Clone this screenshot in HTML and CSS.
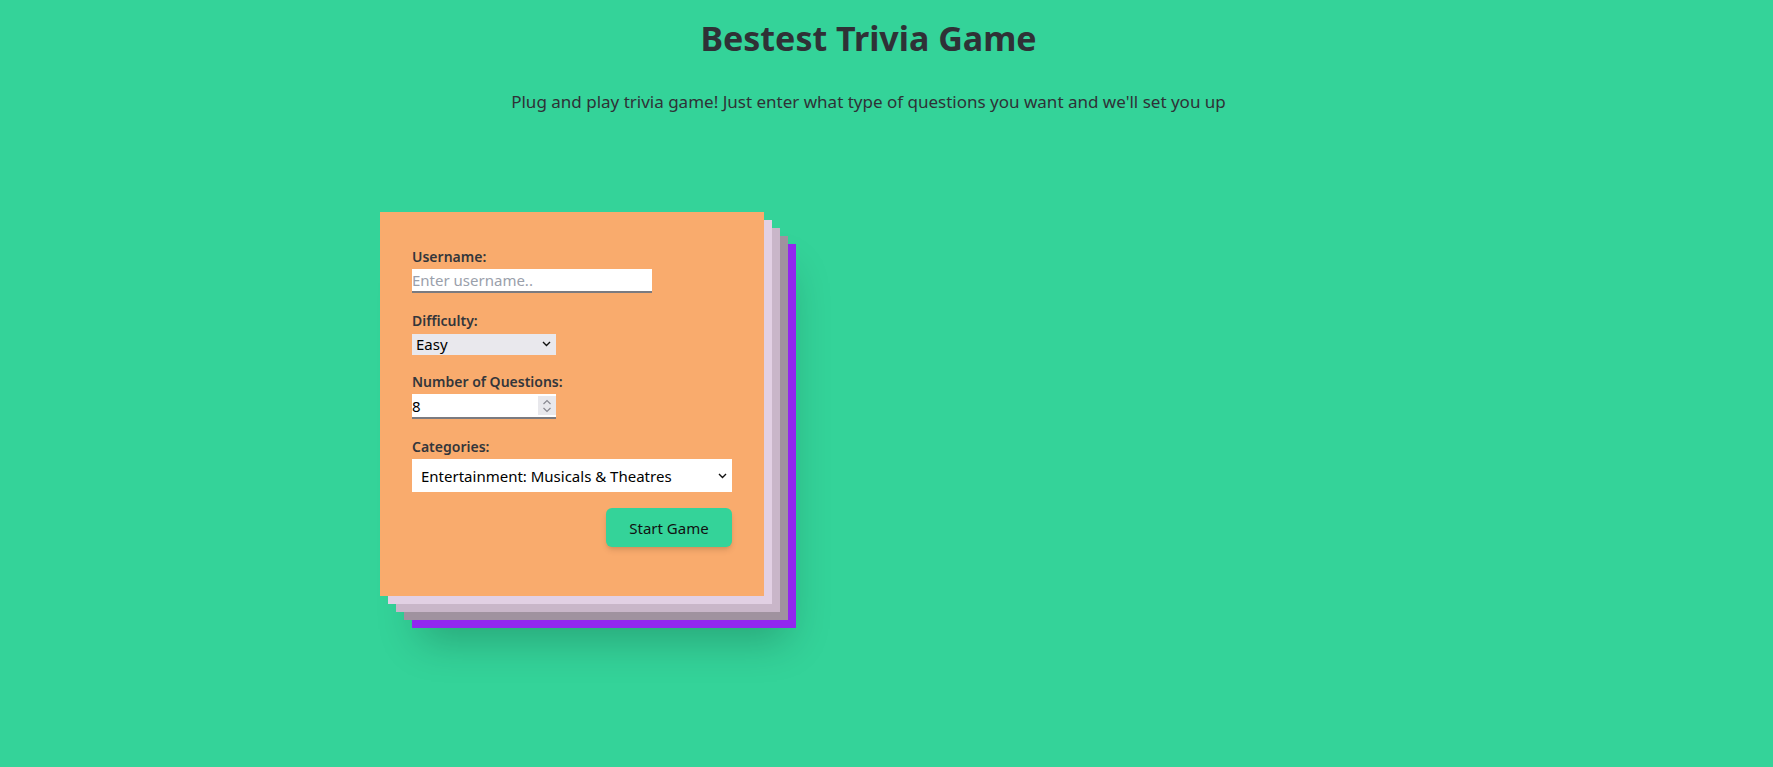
FILE: index.html
```html
<!DOCTYPE html>
<html lang="en">
<head>
<meta charset="utf-8">
<title>Bestest Trivia Game</title>
<link rel="stylesheet" href="styles.css">
</head>
<body>
<header class="header">
  <h1 class="title">Bestest Trivia Game</h1>
  <p class="subtitle">Plug and play trivia game! Just enter what type of questions you want and we'll set you up</p>
</header>
<main class="main">
  <form class="card">
    <div class="field">
      <label class="label" for="username">Username:</label>
      <input class="text-input" id="username" type="text" placeholder="Enter username..">
    </div>
    <div class="field">
      <label class="label" for="difficulty">Difficulty:</label>
      <div class="select-wrap small">
        <select class="select diff" id="difficulty">
          <option>Easy</option>
          <option>Medium</option>
          <option>Hard</option>
        </select>
        <svg class="chev" width="9" height="6" viewBox="0 0 9 6"><path d="M1 1 L4.5 4.5 L8 1" fill="none" stroke="#111" stroke-width="1.4"/></svg>
      </div>
    </div>
    <div class="field">
      <label class="label" for="count">Number of Questions:</label>
      <div class="num-wrap">
        <input class="num-input" id="count" type="number" value="8">
        <span class="spin"><svg width="10" height="14" viewBox="0 0 10 14"><path d="M1.5 5 L5 1.5 L8.5 5" fill="none" stroke="#8a8a92" stroke-width="1.2"/><path d="M1.5 9 L5 12.5 L8.5 9" fill="none" stroke="#8a8a92" stroke-width="1.2"/></svg></span>
      </div>
    </div>
    <div class="field">
      <label class="label" for="category">Categories:</label>
      <div class="select-wrap wide">
        <select class="select cat" id="category">
          <option>Entertainment: Musicals &amp; Theatres</option>
        </select>
        <svg class="chev" width="9" height="6" viewBox="0 0 9 6"><path d="M1 1 L4.5 4.5 L8 1" fill="none" stroke="#111" stroke-width="1.4"/></svg>
      </div>
    </div>
    <div class="actions">
      <button class="btn" type="button">Start Game</button>
    </div>
  </form>
</main>
</body>
</html>
```
FILE: styles.css
```css
* { box-sizing: border-box; }
html, body { margin: 0; padding: 0; }
body {
  background: #34d399;
  min-height: 100vh;
  font-family: "Noto Sans", "Open Sans", sans-serif;
  color: #2f3136;
}
.header {
  text-align: center;
  padding-top: 16px;
  padding-right: 36px;
}
.title {
  margin: 0;
  font-size: 34px;
  line-height: 44px;
  font-weight: 700;
  color: #2f3136;
}
.subtitle {
  margin: 30px 0 0;
  font-size: 17px;
  line-height: 24px;
  color: #2f3136;
}
.main {
  padding-left: 380px;
  padding-top: 98px;
}
.card {
  width: 384px;
  height: 384px;
  padding: 33px 32px 32px;
  background: #f9ab6d;
  display: flex;
  flex-direction: column;
  gap: 16px;
  box-shadow:
    8px 8px 0 #e2d0e4,
    16px 16px 0 #c9b6c9,
    24px 24px 0 #a0929f,
    32px 32px 0 #9227ef,
    32px 52px 40px -8px rgba(0,0,0,0.22);
}
.field { display: flex; flex-direction: column; align-items: flex-start; }
.label {
  font-size: 14px;
  line-height: 24px;
  font-weight: 600;
  color: #33363b;
}
.text-input {
  width: 240px;
  height: 24px;
  border: none;
  border-bottom: 2px solid #7b7b80;
  background: #fff;
  padding: 0;
  font-family: inherit;
  font-size: 15px;
  color: #000;
  outline: none;
}
.text-input::placeholder { color: #9aa0ab; }
.select-wrap { position: relative; }
.select-wrap.small { width: 144px; height: 21px; }
.select-wrap.wide { width: 320px; height: 33px; }
.select {
  appearance: none;
  -webkit-appearance: none;
  border: none;
  width: 100%;
  height: 100%;
  font-family: inherit;
  font-size: 15px;
  color: #000;
  outline: none;
  margin: 0;
  border-radius: 0;
}
.select.diff { background: #e9e8ed; padding: 0 0 0 4px; }
.select.cat { background: #fff; padding: 0 0 0 9px; }
.chev { position: absolute; right: 5px; top: 50%; margin-top: -3px; pointer-events: none; }
.num-wrap { position: relative; width: 144px; height: 25px; }
.num-input {
  width: 100%;
  height: 100%;
  border: none;
  border-bottom: 2px solid #7b7b80;
  background: #fff;
  padding: 0;
  font-family: inherit;
  font-size: 15px;
  color: #000;
  outline: none;
  -moz-appearance: textfield;
}
.num-input::-webkit-inner-spin-button,
.num-input::-webkit-outer-spin-button { -webkit-appearance: none; margin: 0; }
.spin {
  position: absolute;
  right: 0;
  top: 2px;
  width: 18px;
  height: 19px;
  background: #e8e8ec;
  display: flex;
  align-items: center;
  justify-content: center;
}
.actions { display: flex; justify-content: flex-end; }
.btn {
  width: 126px;
  height: 39px;
  border: none;
  border-radius: 6px;
  background: #34d399;
  font-family: inherit;
  font-size: 15px;
  color: #111;
  box-shadow: 0 4px 6px -1px rgba(0,0,0,0.12), 0 2px 4px -2px rgba(0,0,0,0.1);
}
```
